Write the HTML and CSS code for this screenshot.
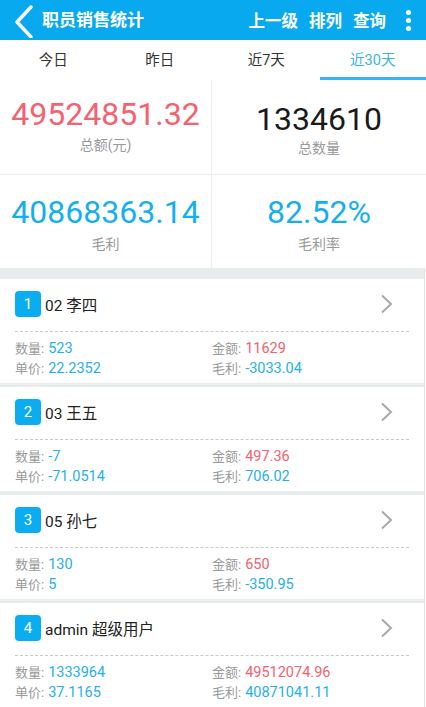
FILE: index.html
```html
<!doctype html>
<html lang="zh-CN">
	<head>
		<meta charset="utf-8" />
		<title>职员销售统计</title>
		<link rel="stylesheet" href="styles.css">
	</head>

	<body>
		<div id="app">
			<!-- Top bar -->
			<div class="topbar">
				<svg class="back" width="22" height="34" viewBox="0 0 22 34">
					<polyline points="18,3 4,18 18,33" fill="none" stroke="#fff" stroke-width="3.4" stroke-linecap="round" stroke-linejoin="round" />
				</svg>
				<div class="title">职员销售统计</div>
				<div class="actions">
					<span>上一级</span>
					<span>排列</span>
					<span>查询</span>
					<span class="more"><i></i><i></i><i></i></span>
				</div>
			</div>

			<!-- Date tabs -->
			<ul class="tabs">
				<li>今日</li>
				<li>昨日</li>
				<li>近7天</li>
				<li class="active">近30天</li>
			</ul>

			<!-- Summary -->
			<div class="stats">
				<div class="stat stat-a">
					<div class="big red">49524851.32</div>
					<div class="caption">总额(元)</div>
				</div>
				<div class="stat stat-b">
					<div class="big dark">1334610</div>
					<div class="caption">总数量</div>
				</div>
				<div class="stat stat-c">
					<div class="big blue">40868363.14</div>
					<div class="caption">毛利</div>
				</div>
				<div class="stat stat-c">
					<div class="big blue">82.52%</div>
					<div class="caption">毛利率</div>
				</div>
			</div>

			<!-- Staff list -->
			<div class="list">
				<div class="card">
					<div class="card-head">
						<span class="badge">1</span>
						<span class="name">02 李四</span>
						<svg class="arrow" width="16" height="20" viewBox="0 0 16 20"><polyline points="3,1.5 12,10 3,18.5" fill="none" stroke="#a9a9a9" stroke-width="2" /></svg>
					</div>
					<div class="card-body">
						<div><span class="label">数量:</span> <span class="val">523</span></div>
						<div><span class="label">金额:</span> <span class="val red">11629</span></div>
						<div><span class="label">单价:</span> <span class="val">22.2352</span></div>
						<div><span class="label">毛利:</span> <span class="val">-3033.04</span></div>
					</div>
				</div>

				<div class="card">
					<div class="card-head">
						<span class="badge">2</span>
						<span class="name">03 王五</span>
						<svg class="arrow" width="16" height="20" viewBox="0 0 16 20"><polyline points="3,1.5 12,10 3,18.5" fill="none" stroke="#a9a9a9" stroke-width="2" /></svg>
					</div>
					<div class="card-body">
						<div><span class="label">数量:</span> <span class="val">-7</span></div>
						<div><span class="label">金额:</span> <span class="val red">497.36</span></div>
						<div><span class="label">单价:</span> <span class="val">-71.0514</span></div>
						<div><span class="label">毛利:</span> <span class="val">706.02</span></div>
					</div>
				</div>

				<div class="card">
					<div class="card-head">
						<span class="badge">3</span>
						<span class="name">05 孙七</span>
						<svg class="arrow" width="16" height="20" viewBox="0 0 16 20"><polyline points="3,1.5 12,10 3,18.5" fill="none" stroke="#a9a9a9" stroke-width="2" /></svg>
					</div>
					<div class="card-body">
						<div><span class="label">数量:</span> <span class="val">130</span></div>
						<div><span class="label">金额:</span> <span class="val red">650</span></div>
						<div><span class="label">单价:</span> <span class="val">5</span></div>
						<div><span class="label">毛利:</span> <span class="val">-350.95</span></div>
					</div>
				</div>

				<div class="card">
					<div class="card-head">
						<span class="badge">4</span>
						<span class="name">admin 超级用户</span>
						<svg class="arrow" width="16" height="20" viewBox="0 0 16 20"><polyline points="3,1.5 12,10 3,18.5" fill="none" stroke="#a9a9a9" stroke-width="2" /></svg>
					</div>
					<div class="card-body">
						<div><span class="label">数量:</span> <span class="val">1333964</span></div>
						<div><span class="label">金额:</span> <span class="val red">49512074.96</span></div>
						<div><span class="label">单价:</span> <span class="val">37.1165</span></div>
						<div><span class="label">毛利:</span> <span class="val">40871041.11</span></div>
					</div>
				</div>
			</div>
		</div>
	</body>
</html>
```

FILE: styles.css
```css
body {
	margin: 0;
	background-color: #fff;
	font-family: Roboto, "Noto Sans CJK SC", sans-serif;
	color: #222;
	overflow: hidden;
}

#app {
	width: 426px;
	height: 707px;
	overflow: hidden;
}

/* top bar */
.topbar {
	display: flex;
	align-items: center;
	height: 40px;
	background-color: #09a9f0;
	color: white;
	padding-left: 13px;
	padding-right: 8px;
	box-sizing: border-box;
}

.back {
	display: block;
	margin-top: 1px;
}

.title {
	margin-left: 7px;
	font-size: 17px;
	font-weight: bold;
	line-height: 40px;
}

.actions {
	display: flex;
	align-items: center;
	margin-left: auto;
	gap: 11px;
	font-size: 16.5px;
	font-weight: bold;
}

.more {
	display: flex;
	flex-direction: column;
	align-items: center;
	gap: 3px;
	width: 20px;
	margin-left: 1px;
}

.more i {
	display: block;
	width: 5px;
	height: 5px;
	border-radius: 50%;
	background: white;
}

/* tabs */
.tabs {
	display: flex;
	margin: 0;
	padding: 0;
	list-style: none;
	height: 40px;
}

.tabs li {
	flex: 1;
	height: 40px;
	padding-top: 4px;
	text-align: center;
	font-size: 14.5px;
	line-height: 33px;
	color: #333;
	box-sizing: border-box;
	border-bottom: 3px solid transparent;
}

.tabs li.active {
	color: #35b4ef;
	border-bottom-color: #35b4ef;
}

/* summary */
.stats {
	display: grid;
	grid-template-columns: 212px 1fr;
	grid-template-rows: 95px 93px;
}

.stat {
	display: flex;
	flex-direction: column;
	align-items: center;
	box-sizing: border-box;
}

.stat:nth-child(odd) {
	border-right: 1px solid #ececec;
}

.stat-a,
.stat-b {
	border-bottom: 1px solid #ececec;
}

.stat-a {
	padding-top: 16px;
}

.stat-b {
	padding-top: 21px;
}

.stat-c {
	padding-top: 19px;
}

.big {
	font-size: 32px;
	line-height: 36px;
}

.caption {
	margin-top: 3px;
	font-size: 14px;
	line-height: 20px;
	color: #999;
}

.stat-b .caption {
	margin-top: 1px;
}

.stat-c .caption {
	margin-top: 4px;
}

.red {
	color: #f5616f;
}

.blue {
	color: #15aff0;
}

.dark {
	color: #1a1a1a;
}

/* list */
.list {
	background-color: #e8ecec;
	padding-top: 11px;
	margin-right: 1px;
	border-right: 1px solid #e2e2e2;
}

.card {
	background: white;
	margin-bottom: 4px;
	padding: 12px 15px 5px 15px;
}

.card-head {
	display: flex;
	align-items: center;
	height: 26px;
	padding-bottom: 14px;
	border-bottom: 1px dashed #c8c8c8;
}

.badge {
	width: 26px;
	height: 26px;
	border-radius: 4px;
	background-color: #0aaef0;
	color: white;
	font-size: 15px;
	line-height: 26px;
	text-align: center;
}

.name {
	margin-left: 4px;
	font-size: 15.5px;
	color: #222;
}

.arrow {
	margin-left: auto;
	margin-right: 14px;
	display: block;
}

.card-body {
	display: grid;
	grid-template-columns: 197px 1fr;
	grid-auto-rows: 20px;
	padding-top: 6px;
	line-height: 20px;
}

.label {
	font-size: 13px;
	color: #999;
}

.val {
	font-size: 14.5px;
	color: #1eb0f0;
}

.val.red {
	color: #f5616f;
}
```
